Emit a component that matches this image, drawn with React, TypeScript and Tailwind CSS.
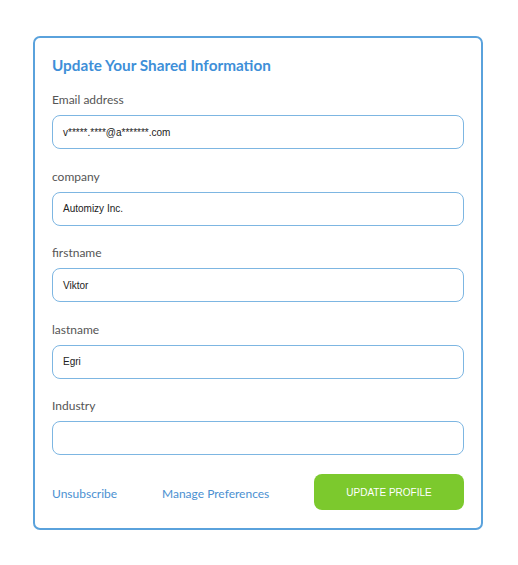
const FIELDS = [
  { label: 'Email address', value: 'v*****.****@a*******.com' },
  { label: 'company', value: 'Automizy Inc.' },
  { label: 'firstname', value: 'Viktor' },
  { label: 'lastname', value: 'Egri' },
  { label: 'Industry', value: '' },
] as const

export default function App() {
  return (
    <div className="min-h-[565px] w-[518px] bg-white pl-[33px] pt-[36px] font-['Lato',sans-serif]">
      <div className="w-[450px] rounded-[7px] border-2 border-[#5aa2dc] px-[17px] pb-[18px] pt-[17px]">
        <h1 className="text-[15.3px] leading-[20px] font-bold text-[#3e8fd8]">Update Your Shared Information</h1>

        <div className="mt-[16px]">
          {FIELDS.map((f, i) => (
            <div key={f.label} className={i === 0 ? '' : 'mt-[18.5px]'}>
              <label className="block pt-[1px] text-[12px] leading-[15px] text-[#555]">{f.label}</label>
              <div className="mt-[8px] flex h-[34px] items-center rounded-[8px] border border-[#7db6e2] px-[10px] font-['Liberation_Sans',Arial,sans-serif] text-[10px] text-[#222]">
                {f.value}
              </div>
            </div>
          ))}
        </div>

        <div className="mt-[19px] flex items-center">
          <a className="w-[110px] pt-[3px] text-[12px] text-[#4b90d1]">Unsubscribe</a>
          <a className="pt-[3px] text-[12px] text-[#4b90d1]">Manage Preferences</a>
          <button className="ml-auto h-[36px] w-[150px] rounded-[8px] bg-[#7cc92d] font-['Liberation_Sans',Arial,sans-serif] text-[10px] text-white">
            UPDATE PROFILE
          </button>
        </div>
      </div>
    </div>
  )
}
